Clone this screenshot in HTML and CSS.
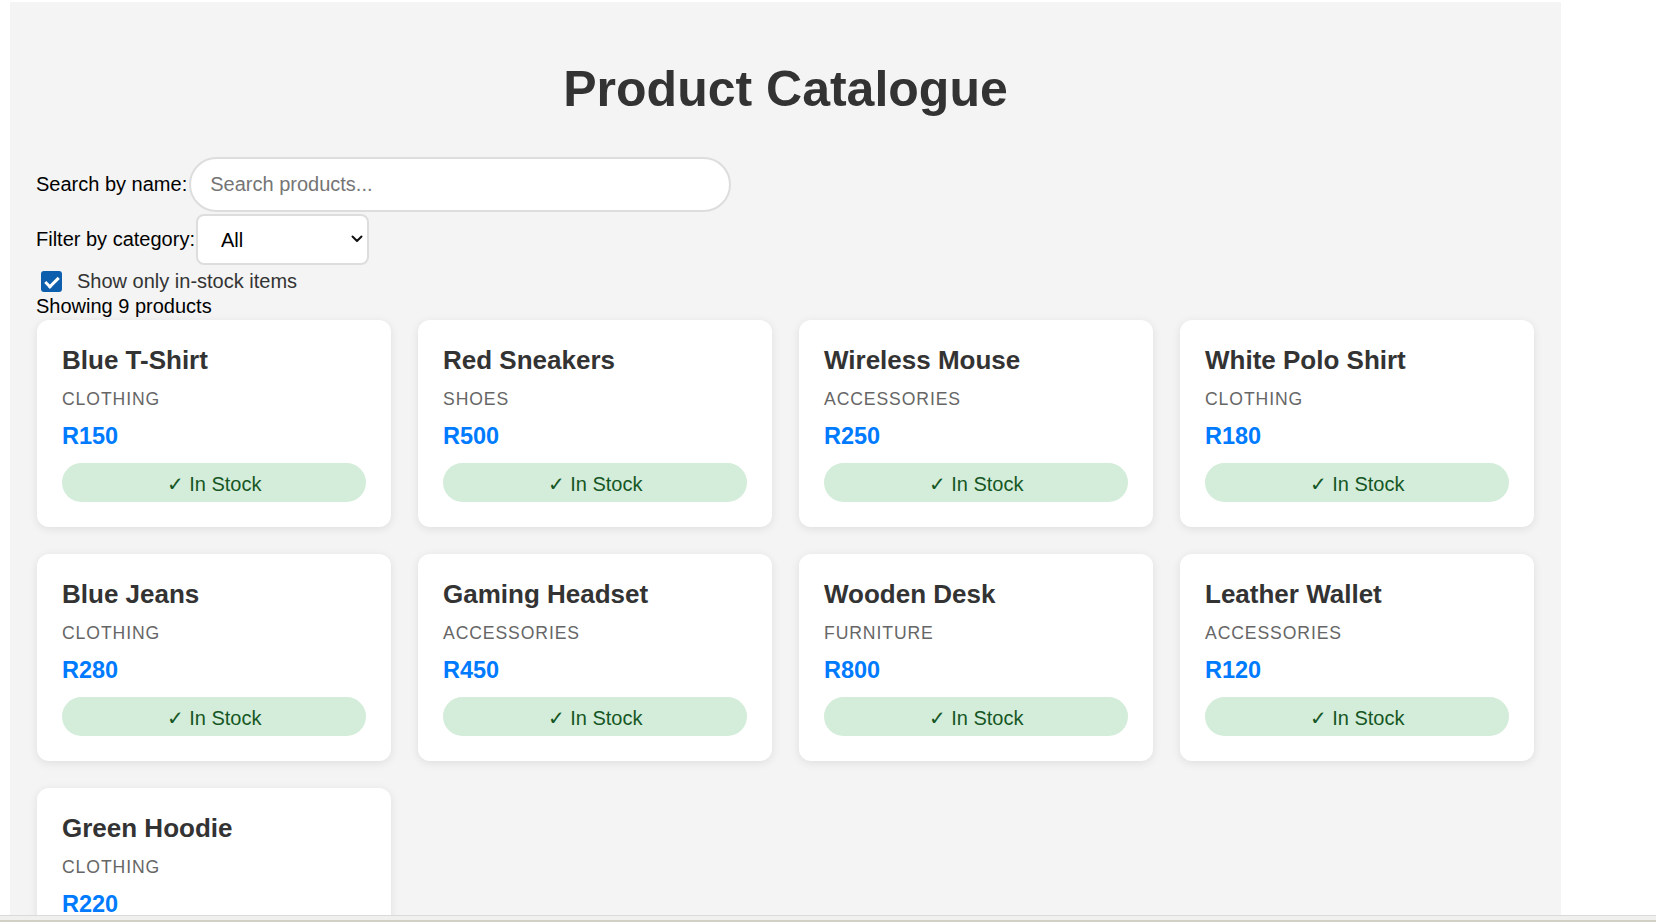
FILE: index.html
```html
<!DOCTYPE html>
<html lang="en">
<head>
<meta charset="utf-8">
<title>Product Catalogue</title>
<link rel="stylesheet" href="styles.css">
</head>
<body>
<div class="page">
  <h1 class="title">Product Catalogue</h1>

  <div class="control-row search-row">
    <label class="control-label" for="search">Search by name:</label>
    <input class="search-input" id="search" type="text" placeholder="Search products...">
  </div>

  <div class="control-row filter-row">
    <label class="control-label" for="category">Filter by category:</label>
    <div class="select-wrap">
      <select class="category-select" id="category">
        <option>All</option>
        <option>Clothing</option>
        <option>Shoes</option>
        <option>Accessories</option>
        <option>Furniture</option>
      </select>
      <svg class="select-chevron" width="12" height="8" viewBox="0 0 12 8"><path d="M1.5 1.5 L6 6 L10.5 1.5" fill="none" stroke="#111" stroke-width="2" stroke-linecap="round" stroke-linejoin="round"/></svg>
    </div>
  </div>

  <label class="stock-row">
    <input class="stock-check" type="checkbox" checked>
    <span class="stock-text">Show only in-stock items</span>
  </label>

  <div class="count">Showing 9 products</div>

  <div class="grid">
    <div class="card">
      <h3 class="card-name">Blue T-Shirt</h3>
      <div class="card-cat">Clothing</div>
      <div class="card-price">R150</div>
      <div class="badge">✓ In Stock</div>
    </div>
    <div class="card">
      <h3 class="card-name">Red Sneakers</h3>
      <div class="card-cat">Shoes</div>
      <div class="card-price">R500</div>
      <div class="badge">✓ In Stock</div>
    </div>
    <div class="card">
      <h3 class="card-name">Wireless Mouse</h3>
      <div class="card-cat">Accessories</div>
      <div class="card-price">R250</div>
      <div class="badge">✓ In Stock</div>
    </div>
    <div class="card">
      <h3 class="card-name">White Polo Shirt</h3>
      <div class="card-cat">Clothing</div>
      <div class="card-price">R180</div>
      <div class="badge">✓ In Stock</div>
    </div>
    <div class="card">
      <h3 class="card-name">Blue Jeans</h3>
      <div class="card-cat">Clothing</div>
      <div class="card-price">R280</div>
      <div class="badge">✓ In Stock</div>
    </div>
    <div class="card">
      <h3 class="card-name">Gaming Headset</h3>
      <div class="card-cat">Accessories</div>
      <div class="card-price">R450</div>
      <div class="badge">✓ In Stock</div>
    </div>
    <div class="card">
      <h3 class="card-name">Wooden Desk</h3>
      <div class="card-cat">Furniture</div>
      <div class="card-price">R800</div>
      <div class="badge">✓ In Stock</div>
    </div>
    <div class="card">
      <h3 class="card-name">Leather Wallet</h3>
      <div class="card-cat">Accessories</div>
      <div class="card-price">R120</div>
      <div class="badge">✓ In Stock</div>
    </div>
    <div class="card">
      <h3 class="card-name">Green Hoodie</h3>
      <div class="card-cat">Clothing</div>
      <div class="card-price">R220</div>
      <div class="badge">✓ In Stock</div>
    </div>
  </div>
</div>
<div class="window-edge"></div>
</body>
</html>
```

FILE: styles.css
```css
* {
  box-sizing: border-box;
}

html, body {
  margin: 0;
  padding: 0;
  background: #ffffff;
}

body {
  font-family: "Liberation Sans", Arial, sans-serif;
  color: #000;
}

.page {
  width: 1551px;
  margin: 2px 0 0 10px;
  padding: 59px 27px 40px;
  background: #f4f4f4;
}

.title {
  margin: 0 0 39px;
  text-align: center;
  font-size: 50px;
  line-height: 57px;
  font-weight: 700;
  color: #333;
}

.control-row {
  display: flex;
  align-items: center;
  gap: 2px;
  margin-left: -1px;
}

.control-label {
  font-size: 20px;
  line-height: 23px;
  color: #000;
}

.search-row {
  height: 55px;
}

.search-input {
  width: 542px;
  height: 55px;
  border: 2px solid #dddddd;
  border-radius: 28px;
  padding: 0 19px;
  font-family: "Liberation Sans", Arial, sans-serif;
  font-size: 20px;
  color: #000;
  background: #fff;
  outline: none;
}

.search-input::placeholder {
  color: #757575;
}

.filter-row {
  margin-top: 2px;
  height: 51px;
  gap: 1px;
}

.select-wrap {
  position: relative;
  width: 173px;
  height: 51px;
}

.category-select {
  appearance: none;
  -webkit-appearance: none;
  width: 173px;
  height: 51px;
  border: 2px solid #dddddd;
  border-radius: 8px;
  padding: 0 30px 0 23px;
  font-family: "Liberation Sans", Arial, sans-serif;
  font-size: 20px;
  color: #000;
  background: #fff;
  outline: none;
}

.select-chevron {
  position: absolute;
  right: 6px;
  top: 21px;
  pointer-events: none;
}

.stock-row {
  display: flex;
  align-items: center;
  height: 24px;
  margin-top: 4px;
  margin-left: -1px;
}

.stock-check {
  appearance: none;
  -webkit-appearance: none;
  position: relative;
  width: 21px;
  height: 21px;
  margin: 0 15px 0 5px;
  border-radius: 3px;
  background: #0d5fad;
  border: none;
}

.stock-check::after {
  content: "";
  position: absolute;
  left: 7px;
  top: 3px;
  width: 5px;
  height: 11px;
  border: solid #fff;
  border-width: 0 3px 3px 0;
  transform: rotate(45deg);
}

.stock-text {
  font-size: 20px;
  line-height: 23px;
  color: #333;
}

.count {
  margin-top: 2px;
  margin-left: -1px;
  font-size: 20px;
  line-height: 23px;
  color: #000;
}

.grid {
  margin-top: 2px;
  display: grid;
  grid-template-columns: repeat(4, 354px);
  column-gap: 27px;
  row-gap: 27px;
}

.card {
  background: #fff;
  border-radius: 12px;
  padding: 26px 25px 25px;
  box-shadow: 0 2px 10px rgba(0, 0, 0, 0.09);
  height: 207px;
}

.card-name {
  margin: 0 0 14px;
  font-size: 26px;
  line-height: 29.4px;
  font-weight: 700;
  color: #333;
}

.card-cat {
  margin-bottom: 13.7px;
  font-size: 17.6px;
  line-height: 20.2px;
  letter-spacing: 0.9px;
  text-transform: uppercase;
  color: #666;
}

.card-price {
  margin-bottom: 13.2px;
  font-size: 23.5px;
  line-height: 26.4px;
  font-weight: 700;
  color: #007bff;
}

.badge {
  height: 39px;
  padding: 10px 0 6px;
  border-radius: 20px;
  background: #d4edda;
  color: #155724;
  text-align: center;
  font-size: 20px;
  line-height: 23px;
}

.window-edge {
  position: fixed;
  left: 0;
  right: 0;
  bottom: 0;
  height: 7px;
  background: #f0f0ee;
  border-top: 1px solid #dadada;
  border-bottom: 2px solid #d2d0c4;
}
```
